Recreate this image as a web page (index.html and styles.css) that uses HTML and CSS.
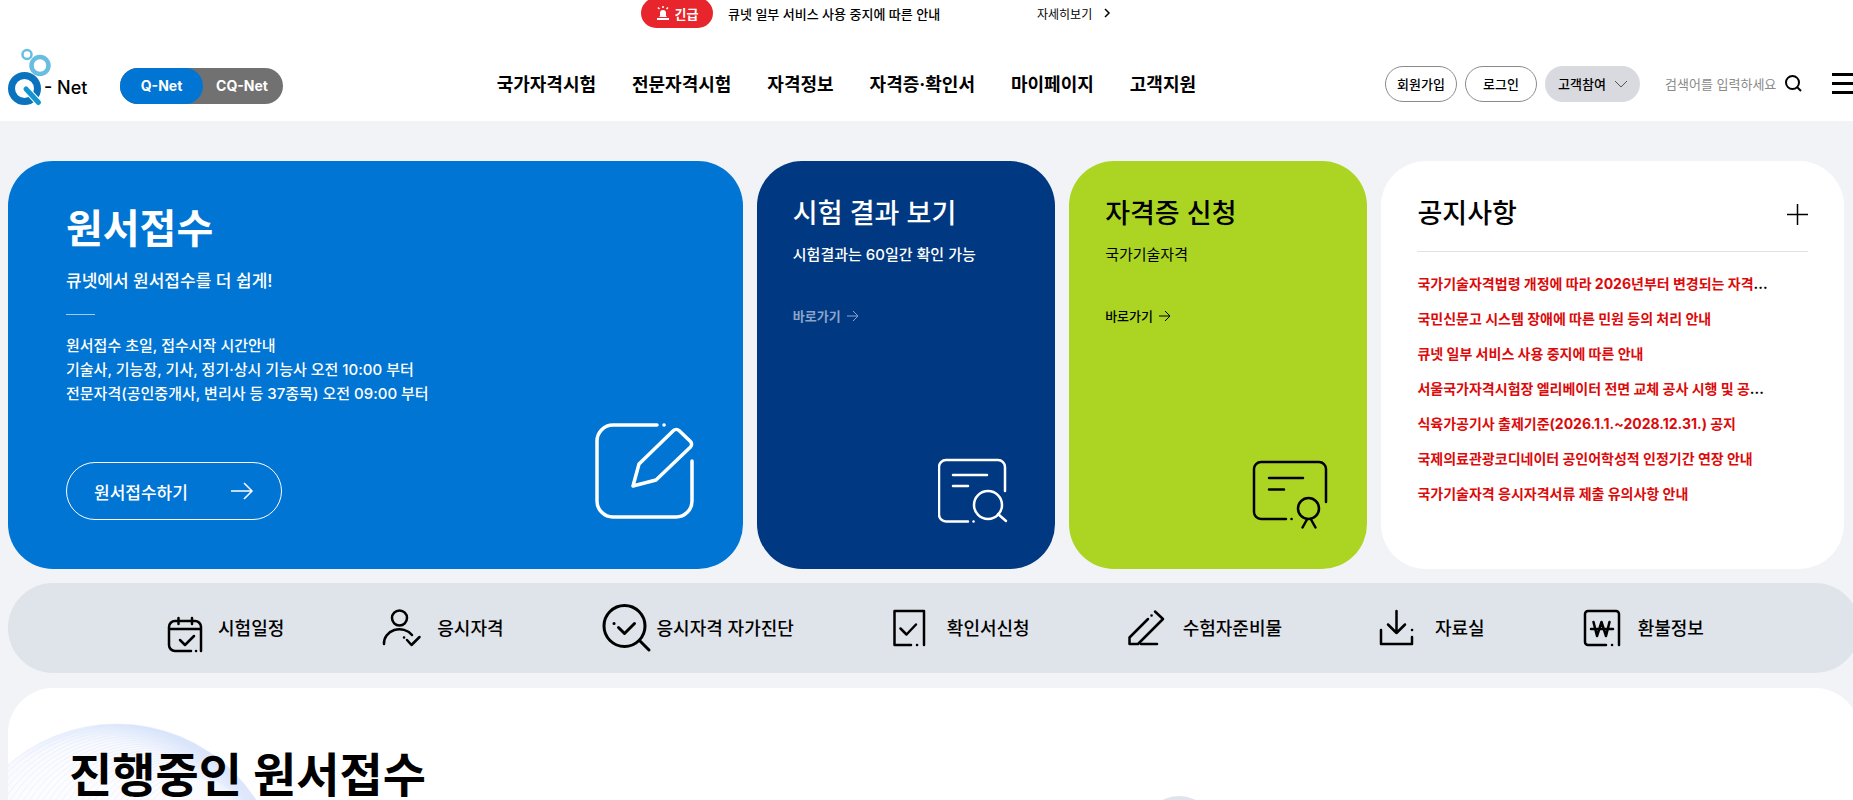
FILE: index.html
```html
<!DOCTYPE html>
<html lang="ko">
<head>
    <meta charset="UTF-8">
    <meta name="viewport" content="width=device-width, initial-scale=1.0">
    <title>Q-Net</title>
    <link rel="stylesheet" href="styles.css">
</head>
<body>
    <header class="header">
        <div class="alert">
            <span class="alert-badge">
                <svg width="14" height="16" viewBox="0 0 14 16" aria-hidden="true">
                    <path d="M4 11V8a3 3 0 0 1 6 0v3l1 1H3z" fill="#fff"/>
                    <path d="M1 14h12" stroke="#fff" stroke-width="2"/>
                    <path d="M7 1v2M2 2.500l1.500 1.500M12 2.500L10.500 4" stroke="#fff" stroke-width="1.500"/>
                </svg>
                긴급
            </span>
            <p class="alert-text">큐넷 일부 서비스 사용 중지에 따른 안내</p>
            <a class="alert-more" href="#">자세히보기
                <svg width="7" height="10" viewBox="0 0 7 10" aria-hidden="true"><path d="M1 1l4 4-4 4" fill="none" stroke="#000" stroke-width="1.500"/></svg>
            </a>
        </div>

        <div class="gnb">
            <div class="brand">
                <a class="logo" href="#">
                    <svg width="36" height="58" viewBox="8 48 36 58" fill="none" aria-hidden="true">
                        <circle cx="27" cy="54.500" r="4.500" stroke="#68bde0" stroke-width="2.500"/>
                        <circle cx="40" cy="65.500" r="8.500" stroke="#68bde0" stroke-width="4.500"/>
                        <circle cx="24.500" cy="88.500" r="13" stroke="#0b72bd" stroke-width="7"/>
                        <path d="M26 89l12.500 13.500" stroke="#fff" stroke-width="7" stroke-linecap="round"/>
                        <path d="M26 89l12.500 13.500" stroke="#1396d0" stroke-width="5" stroke-linecap="round"/>
                    </svg>
                    <span>- Net</span>
                </a>
                <div class="site-switch">
                    <a class="on" href="#">Q-Net</a>
                    <a href="#">CQ-Net</a>
                </div>
            </div>

            <nav class="menu">
                <a href="#">국가자격시험</a>
                <a href="#">전문자격시험</a>
                <a href="#">자격정보</a>
                <a href="#">자격증·확인서</a>
                <a href="#">마이페이지</a>
                <a href="#">고객지원</a>
            </nav>

            <div class="util">
                <a class="pill" href="#">회원가입</a>
                <a class="pill" href="#">로그인</a>
                <button class="pill pill-gray" type="button">고객참여
                    <svg width="12" height="8" viewBox="0 0 12 8" aria-hidden="true"><path d="M0 1l6 6 6-6" fill="none" stroke="#555" stroke-width="1"/></svg>
                </button>
                <form class="search">
                    <input type="text" placeholder="검색어를 입력하세요" aria-label="검색어">
                    <button type="submit" aria-label="검색">
                        <svg width="17" height="17" viewBox="0 0 17 17" fill="none" stroke="#000" stroke-width="2"><circle cx="7.500" cy="7.500" r="6.500"/><path d="M12 12l4 4"/></svg>
                    </button>
                </form>
                <button class="hamburger" type="button" aria-label="전체메뉴"><i></i><i></i><i></i></button>
            </div>
        </div>
    </header>

    <main class="main">
        <div class="cards">
            <section class="card card-apply">
                <h2>원서접수</h2>
                <p class="lead">큐넷에서 원서접수를 더 쉽게!</p>
                <span class="bar"></span>
                <p class="desc">원서접수 초일, 접수시작 시간안내<br>기술사, 기능장, 기사, 정기·상시 기능사 오전 10:00 부터<br>전문자격(공인중개사, 변리사 등 37종목) 오전 09:00 부터</p>
                <div class="apply-foot">
                    <a class="apply-btn" href="#">원서접수하기
                        <svg width="24" height="18" viewBox="0 0 24 18" aria-hidden="true"><path d="M1 9h21M14 1l8 8-8 8" fill="none" stroke="#fff" stroke-width="1.500"/></svg>
                    </a>
                    <svg class="line-icon" width="100" height="98" viewBox="593 422 100 98" stroke-width="3.500" aria-hidden="true">
                        <path d="M656 425h-44a16 16 0 0 0-16 16v60a16 16 0 0 0 16 16h63a16 16 0 0 0 16-16v-40M663 425h.1"/>
                        <path d="M632 486l6-22 34.500-33.500a4 4 0 0 1 5.500 0l11.500 11a4 4 0 0 1 0 5.500L655 480z"/>
                    </svg>
                </div>
            </section>

            <section class="card card-result">
                <h2>시험 결과 보기</h2>
                <p class="sub">시험결과는 60일간 확인 가능</p>
                <a class="go" href="#">바로가기
                    <svg width="12" height="12" viewBox="0 0 12 12" aria-hidden="true"><path d="M0 6h11M6 1l5 5-5 5" fill="none" stroke="currentColor"/></svg>
                </a>
                <svg class="line-icon card-icon" width="70" height="66" viewBox="938 458 70 66" stroke-width="2.500" aria-hidden="true">
                    <path d="M968 521.500h-22a7 7 0 0 1-7-7V467a7 7 0 0 1 7-7h52a7 7 0 0 1 7 7v24M973.500 521.500h.1M953 475h34M953 486h15"/>
                    <circle cx="988" cy="505" r="14"/>
                    <path d="M998 514l8 7"/>
                </svg>
            </section>

            <section class="card card-license">
                <h2>자격증 신청</h2>
                <p class="sub">국가기술자격</p>
                <a class="go" href="#">바로가기
                    <svg width="12" height="12" viewBox="0 0 12 12" aria-hidden="true"><path d="M0 6h11M6 1l5 5-5 5" fill="none" stroke="currentColor"/></svg>
                </a>
                <svg class="line-icon card-icon" width="76" height="70" viewBox="1252 460 76 70" stroke-width="2.500" aria-hidden="true">
                    <path d="M1286 520h-25a7 7 0 0 1-7-7v-43a7 7 0 0 1 7-7h58a7 7 0 0 1 7 7v33M1291.500 520h.1M1269 479h34M1269 490.500h15"/>
                    <circle cx="1308.500" cy="509.500" r="10.500"/>
                    <path d="M1307 520.500l-4.500 8M1311 520.500l4.500 8"/>
                </svg>
            </section>

            <section class="card card-notice">
                <div class="notice-head">
                    <h2>공지사항</h2>
                    <a href="#" aria-label="공지사항 더보기">
                        <svg width="21" height="21" viewBox="0 0 21 21"><path d="M10.500 0v21M0 10.500h21" stroke="#000" stroke-width="1.500"/></svg>
                    </a>
                </div>
                <ul>
                    <li><a href="#">국가기술자격법령 개정에 따라 2026년부터 변경되는 자격</a>...</li>
                    <li><a href="#">국민신문고 시스템 장애에 따른 민원 등의 처리 안내</a></li>
                    <li><a href="#">큐넷 일부 서비스 사용 중지에 따른 안내</a></li>
                    <li><a href="#">서울국가자격시험장 엘리베이터 전면 교체 공사 시행 및 공</a>...</li>
                    <li><a href="#">식육가공기사 출제기준(2026.1.1.~2028.12.31.) 공지</a></li>
                    <li><a href="#">국제의료관광코디네이터 공인어학성적 인정기간 연장 안내</a></li>
                    <li><a href="#">국가기술자격 응시자격서류 제출 유의사항 안내</a></li>
                </ul>
            </section>
        </div>

        <nav class="quick">
            <a href="#">
                <svg class="line-icon" width="48" height="52" viewBox="162 599 48 52" aria-hidden="true"><path d="M189 649h-16a6 6 0 0 1-6-6v-18a6 6 0 0 1 6-6h20a6 6 0 0 1 6 6v24M194 649h.1M167 627h32M176.500 616v6M190 616v6M178 638l5 5 9-9"/></svg>
                시험일정
            </a>
            <a href="#">
                <svg class="line-icon" width="48" height="52" viewBox="380 601 48 52" aria-hidden="true"><circle cx="396.500" cy="618" r="7.500"/><path d="M381 644a15.500 14 0 0 1 28-9M401 637.500h.1M404 640l4.500 5 8-8"/></svg>
                응시자격
            </a>
            <a href="#">
                <svg class="line-icon icon-bold" width="48" height="52" viewBox="600 601 48 52" aria-hidden="true"><circle cx="621.500" cy="626" r="20.500"/><path d="M637 641l9 9M611 623.500h.1M615.500 627.500l6 6 10-10"/></svg>
                응시자격 자가진단
            </a>
            <a href="#">
                <svg class="line-icon" width="48" height="52" viewBox="892 601 48 52" aria-hidden="true"><path d="M910 645h-16.500v-34H923v34M916 645h.1M899.500 628.500l6 6 9.500-10"/></svg>
                확인서신청
            </a>
            <a href="#">
                <svg class="line-icon" width="48" height="52" viewBox="1129 601 48 52" aria-hidden="true"><path d="M1148 619l-18.500 18.500v6.500h8.500l25-25-8-7.500M1151.500 615.500h.1M1141 644h16"/></svg>
                수험자준비물
            </a>
            <a href="#">
                <svg class="line-icon" width="48" height="52" viewBox="1382 601 48 52" aria-hidden="true"><path d="M1397.500 611v22M1389 624.500l8.500 8.500 8.500-8.500M1382 630v14h31v-7M1413 630h.1"/></svg>
                자료실
            </a>
            <a href="#">
                <svg class="line-icon" width="48" height="52" viewBox="1583 601 48 52" aria-hidden="true"><path d="M1605 645h-18a3 3 0 0 1-3-3v-28a3 3 0 0 1 3-3h28a3 3 0 0 1 3 3v31M1611 645h.1M1592.500 622l3.500 14 4.500-14 4.500 14 3.500-14M1590 629h22"/></svg>
                환불정보
            </a>
        </nav>

        <section class="ongoing">
            <svg class="ongoing-deco" id="deco" width="340" height="340" viewBox="-170 -170 340 340" aria-hidden="true">
                <defs>
                    <radialGradient id="glow" gradientUnits="userSpaceOnUse" cx="-20" cy="20" r="188">
                        <stop offset="0.700" stop-color="#f4f5fe" stop-opacity="0.200"/>
                        <stop offset="0.880" stop-color="#eef3fe" stop-opacity="0.400"/>
                        <stop offset="1" stop-color="#d6e5fb"/>
                    </radialGradient>
                </defs>
                <circle r="165" fill="url(#glow)"/>
            </svg>
            <h2>진행중인 원서접수</h2>
            <button class="round" type="button" aria-label="더보기"></button>
        </section>
    </main>

    <script>
        // Thin rings that meet at the upper right edge of the disc
        const deco = document.getElementById("deco");
        for (let i = 0; i < 28; i++) {
            const ring = document.createElementNS("http://www.w3.org/2000/svg", "circle");
            ring.setAttribute("cx", i * 3);
            ring.setAttribute("cy", i * -2);
            ring.setAttribute("r", 165 - i * 4);
            ring.setAttribute("class", "ring");
            deco.appendChild(ring);
        }
    </script>
</body>
</html>
```
FILE: styles.css
```css
* {
    box-sizing: border-box;
}

body {
    margin: 0;
    background-color: #f1f3f7;
    color: #000;
    font-family: "Inter", "Noto Sans CJK KR", sans-serif;
    font-size: 15px;
    overflow-x: hidden;
}

h2,
p,
ul {
    margin: 0;
    padding: 0;
}

a {
    color: inherit;
    text-decoration: none;
}

button {
    font-family: inherit;
    border: none;
    background: none;
    padding: 0;
    cursor: pointer;
}

svg {
    flex-shrink: 0;
}

.line-icon {
    fill: none;
    stroke: currentColor;
    stroke-linecap: round;
    stroke-linejoin: round;
}

/* Header */
.header {
    background-color: #fff;
    height: 121px;
    padding-left: 8px;
    margin-right: -7px;
}

.alert {
    display: flex;
    align-items: center;
    width: 586px;
    height: 26px;
    margin: 0 auto;
}

.alert-badge {
    display: flex;
    align-items: center;
    justify-content: center;
    gap: 5px;
    width: 72px;
    height: 30px;
    border-radius: 15px;
    background-color: #e8242c;
    color: #fff;
    font-size: 13px;
    font-weight: 700;
}

.alert-text {
    width: 309px;
    margin-left: 15px;
    font-size: 13px;
    font-weight: 500;
}

.alert-more {
    display: flex;
    align-items: center;
    gap: 12px;
    font-size: 12px;
}

.gnb {
    display: grid;
    grid-template-columns: 485fr auto 659fr;
    align-items: center;
    height: 95px;
}

.brand {
    display: flex;
    align-items: center;
    gap: 32px;
    padding-top: 6px;
}

.logo {
    display: flex;
    align-items: center;
    width: 80px;
    height: 58px;
    font-size: 18px;
    font-weight: 500;
}

.logo svg {
    overflow: visible;
}

.logo span {
    padding-top: 22px;
}

.site-switch {
    display: flex;
    width: 163px;
    height: 36px;
    margin-top: 18px;
    border-radius: 18px;
    background-color: #717171;
    color: #fff;
    font-size: 14px;
    font-weight: 700;
    line-height: 36px;
    text-align: center;
}

.site-switch a {
    width: 78px;
}

.site-switch .on {
    width: 83px;
    border-radius: 18px;
    background-color: #0075d3;
}

.menu {
    display: flex;
    gap: 36px;
    padding-top: 18px;
    font-size: 18px;
    font-weight: 700;
    white-space: nowrap;
}

.util {
    display: flex;
    align-items: center;
    justify-content: flex-end;
    padding-top: 20px;
}

.pill {
    display: flex;
    align-items: center;
    justify-content: center;
    width: 72px;
    height: 36px;
    margin-right: 8px;
    border: 1px solid #8a8a8a;
    border-radius: 18px;
    color: #000;
    font-size: 13px;
    font-weight: 500;
}

.pill-gray {
    gap: 9px;
    width: 95px;
    margin-right: 25px;
    border: none;
    background-color: #d9dadf;
}

.search {
    display: flex;
    align-items: center;
}

.search input {
    width: 120px;
    border: none;
    padding: 0;
    background: none;
    font-family: inherit;
    font-size: 13px;
}

.search input::placeholder {
    color: #8a8a8a;
}

.search button {
    display: flex;
}

.hamburger {
    display: flex;
    flex-direction: column;
    gap: 6px;
    width: 28px;
    margin-left: 30px;
}

.hamburger i {
    width: 100%;
    height: 3px;
    background-color: #000;
}

/* Main cards */
.main {
    padding: 40px 0 0 8px;
    margin-right: -7px;
}

.cards {
    display: grid;
    grid-template-columns: 734fr 298fr 298fr 462fr;
    gap: 14px;
    min-height: 408px;
    margin-right: 16px;
}

.card {
    display: flex;
    flex-direction: column;
    align-items: flex-start;
    padding: 36px;
    border-radius: 45px;
}

.card h2 {
    font-size: 27px;
    font-weight: 500;
    line-height: 34px;
}

.card .sub {
    margin-top: 14px;
    font-size: 15px;
    line-height: 20px;
}

.go {
    display: flex;
    align-items: center;
    gap: 6px;
    margin-top: 42px;
    font-size: 13px;
    font-weight: 500;
    line-height: 18px;
}

.card-icon {
    margin-top: auto;
    align-self: flex-end;
}

.card-apply {
    padding: 44px 49px 49px 58px;
    background-color: #0075d3;
    color: #fff;
}

.card-apply h2 {
    font-size: 40px;
    font-weight: 700;
    line-height: 48px;
}

.card-apply .lead {
    margin-top: 16px;
    font-size: 17px;
    font-weight: 500;
    line-height: 24px;
}

.card-apply .bar {
    width: 29px;
    height: 1px;
    margin: 21px 0 19px;
    background-color: #9fcdf0;
}

.card-apply .desc {
    font-weight: 500;
    line-height: 24px;
}

.apply-foot {
    display: flex;
    align-items: flex-end;
    justify-content: space-between;
    width: 100%;
    margin-top: auto;
}

.apply-btn {
    display: flex;
    align-items: center;
    justify-content: space-between;
    width: 216px;
    height: 58px;
    padding: 0 27px;
    border: 1px solid #fff;
    border-radius: 29px;
    font-size: 17px;
    font-weight: 500;
}

.card-result {
    padding-right: 47px;
    padding-bottom: 45px;
    background-color: #003881;
    color: #fff;
}

.card-result .sub {
    font-weight: 500;
}

.card-result .go {
    color: #8ba5c9;
    font-weight: 700;
}

.card-license {
    padding-right: 39px;
    padding-bottom: 40px;
    background-color: #acd523;
}

.card-notice {
    align-items: stretch;
    background-color: #fff;
}

.notice-head {
    display: flex;
    align-items: center;
    justify-content: space-between;
    padding-bottom: 20px;
    border-bottom: 1px solid #e2e2e2;
}

.notice-head a {
    display: flex;
}

.card-notice ul {
    margin-top: 14px;
    list-style: none;
}

.card-notice li {
    font-size: 14px;
    font-weight: 700;
    line-height: 35px;
    white-space: nowrap;
}

.card-notice li a {
    color: #dc0a0a;
}

/* Quick links */
.quick {
    display: flex;
    align-items: center;
    justify-content: center;
    gap: 99px;
    height: 90px;
    margin-top: 14px;
    padding-bottom: 3px;
    border-radius: 45px;
    background-color: #dfe3ea;
}

.quick a {
    display: flex;
    align-items: center;
    gap: 6px;
    font-size: 18px;
    font-weight: 500;
    white-space: nowrap;
}

.quick svg {
    stroke-width: 2.5px;
    overflow: visible;
}

.quick .icon-bold {
    stroke-width: 3px;
}

/* Ongoing applications */
.ongoing {
    position: relative;
    display: flex;
    align-items: flex-start;
    justify-content: space-between;
    min-height: 240px;
    margin-top: 15px;
    padding: 63px 643px 40px 61px;
    border-radius: 45px 45px 0 0;
    background-color: #fff;
    overflow: hidden;
}

.ongoing h2 {
    position: relative;
    font-size: 47px;
    font-weight: 700;
    line-height: 48px;
}

.ongoing-deco {
    position: absolute;
    left: -61px;
    top: 31px;
}

.ring {
    fill: none;
    stroke: #e2e8fc;
    stroke-width: 1px;
    opacity: 0.5;
}

.round {
    width: 76px;
    height: 76px;
    margin-top: 45px;
    border-radius: 50%;
    background-color: #dfe3ea;
}
```
